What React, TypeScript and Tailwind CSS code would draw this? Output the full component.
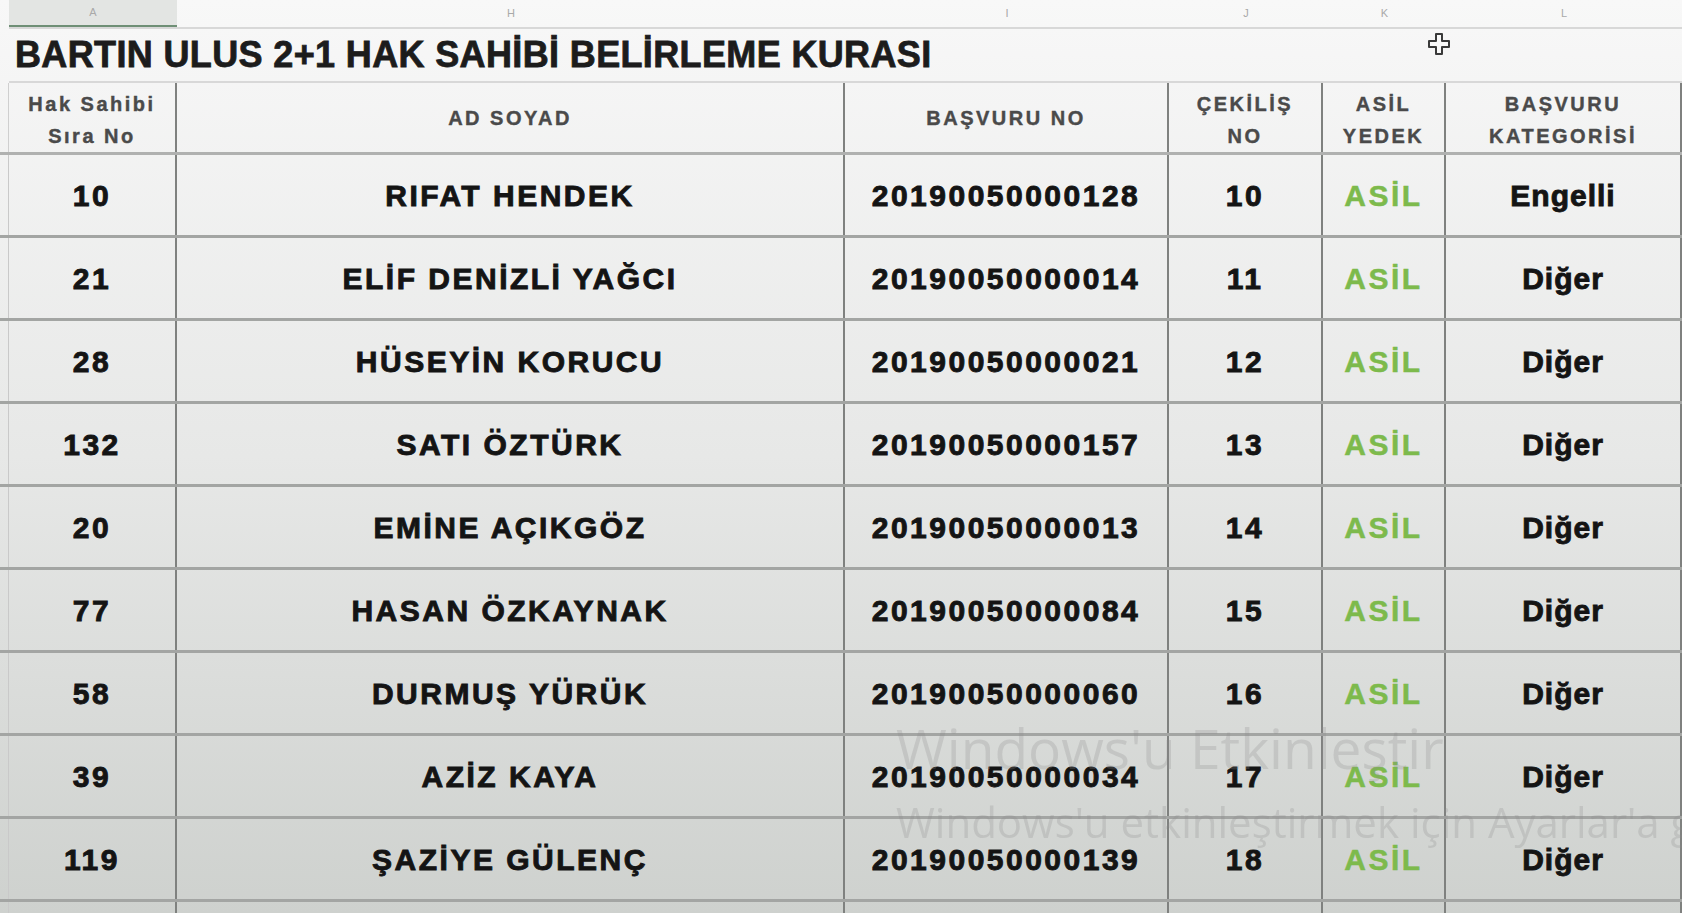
import React from 'react'

const cols = 'grid-cols-[9px_168px_668px_324px_154px_123px_236px]'

interface Row {
  sira: string
  name: string
  basvuru: string
  cekilis: string
  kategori: string
}

const rows: Row[] = [
  { sira: '10', name: 'RIFAT HENDEK', basvuru: '20190050000128', cekilis: '10', kategori: 'Engelli' },
  { sira: '21', name: 'ELİF DENİZLİ YAĞCI', basvuru: '20190050000014', cekilis: '11', kategori: 'Diğer' },
  { sira: '28', name: 'HÜSEYİN KORUCU', basvuru: '20190050000021', cekilis: '12', kategori: 'Diğer' },
  { sira: '132', name: 'SATI ÖZTÜRK', basvuru: '20190050000157', cekilis: '13', kategori: 'Diğer' },
  { sira: '20', name: 'EMİNE AÇIKGÖZ', basvuru: '20190050000013', cekilis: '14', kategori: 'Diğer' },
  { sira: '77', name: 'HASAN ÖZKAYNAK', basvuru: '20190050000084', cekilis: '15', kategori: 'Diğer' },
  { sira: '58', name: 'DURMUŞ YÜRÜK', basvuru: '20190050000060', cekilis: '16', kategori: 'Diğer' },
  { sira: '39', name: 'AZİZ KAYA', basvuru: '20190050000034', cekilis: '17', kategori: 'Diğer' },
  { sira: '119', name: 'ŞAZİYE GÜLENÇ', basvuru: '20190050000139', cekilis: '18', kategori: 'Diğer' },
]

const font = "font-['Liberation_Sans',Arial,sans-serif]"

function Cell({ children, className = '' }: { children?: React.ReactNode; className?: string }) {
  return (
    <div className={`flex items-center justify-center border-r-2 border-[#7f817f] ${className}`}>
      {children}
    </div>
  )
}

function CursorIcon() {
  return (
    <svg width="24" height="24" viewBox="0 0 24 24">
      <path
        d="M9 2h6v7h7v6h-7v7H9v-7H2V9h7z"
        fill="#fafafa"
        stroke="#3a3a3a"
        strokeWidth="2"
        strokeLinejoin="round"
      />
    </svg>
  )
}

export default function App() {
  return (
    <div className={`relative w-[1682px] h-[913px] overflow-hidden bg-linear-to-b from-[#f8f8f8] via-[#e7e8e7] to-[#ced1ce] ${font}`}>
      {/* column letters */}
      <div className={`grid ${cols} h-[27px] text-[11px] text-[#a9a9a9]`}>
        <div />
        <div className="flex items-center justify-center bg-[#e3e5e3] border-b-2 border-[#6f8f76]">A</div>
        <div className="flex items-center justify-center">H</div>
        <div className="flex items-center justify-center">I</div>
        <div className="flex items-center justify-center">J</div>
        <div className="flex items-center justify-center">K</div>
        <div className="flex items-center justify-center">L</div>
      </div>

      {/* title */}
      <div className="relative flex items-center h-[56px] pl-[6px] border-y-2 border-[#d8d8d8] ml-[9px]">
        <span className="text-[36px] font-bold text-[#1c1c1c] tracking-[0.01em] [-webkit-text-stroke:0.8px_#1c1c1c]">
          BARTIN ULUS 2+1 HAK SAHİBİ BELİRLEME KURASI
        </span>
        <div className="absolute left-[1418px] top-[3px]">
          <CursorIcon />
        </div>
      </div>

      {/* header */}
      <div className={`grid ${cols} h-[72px] border-b-[3px] border-[#b0b1b0] text-[20px] font-bold text-[#4a4a4a] tracking-[2.5px] leading-[32px] text-center [-webkit-text-stroke:0.4px_#4a4a4a]`}>
        <div className="border-r border-[#cfcfcf]" />
        <Cell><span className="pt-[4px]">Hak Sahibi<br />Sıra No</span></Cell>
        <Cell>AD SOYAD</Cell>
        <Cell>BAŞVURU NO</Cell>
        <Cell><span className="pt-[4px]">ÇEKİLİŞ<br />NO</span></Cell>
        <Cell><span className="pt-[4px]">ASİL<br />YEDEK</span></Cell>
        <Cell className="border-r-0"><span className="pt-[4px]">BAŞVURU<br />KATEGORİSİ</span></Cell>
      </div>

      {/* rows */}
      {rows.map((r) => (
        <div
          key={r.basvuru}
          className={`grid ${cols} h-[83px] border-b-[3px] border-[#a3a5a3] text-[30px] font-bold text-[#141414] tracking-[2.5px] [-webkit-text-stroke:0.9px_#141414]`}
        >
          <div className="border-r border-[#c9c9c9]" />
          <Cell>{r.sira}</Cell>
          <Cell>{r.name}</Cell>
          <Cell>{r.basvuru}</Cell>
          <Cell>{r.cekilis}</Cell>
          <Cell className="text-[#7dba4c] [-webkit-text-stroke:0.5px_#7dba4c]">ASİL</Cell>
          <Cell className="border-r-0 tracking-[1px]">{r.kategori}</Cell>
        </div>
      ))}
      <div className={`grid ${cols} h-[20px]`}>
        <div className="border-r border-[#c9c9c9]" />
        <Cell />
        <Cell />
        <Cell />
        <Cell />
        <Cell />
        <Cell className="border-r-0" />
      </div>

      {/* activation watermark */}
      <div className="absolute left-[896px] top-[718px] font-['Open_Sans',sans-serif] text-[#8c8c8c]/25 whitespace-nowrap pointer-events-none blur-[0.6px]">
        <div className="text-[55px] leading-[60px]">Windows'u Etkinleştir</div>
        <div className="text-[42px] leading-[56px] mt-[16px]">Windows'u etkinleştirmek için Ayarlar'a gidin.</div>
      </div>
    </div>
  )
}
